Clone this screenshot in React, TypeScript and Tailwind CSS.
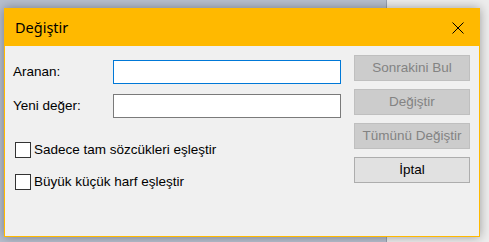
import React from 'react';

const ui = { fontFamily: '"Liberation Sans", Arial, sans-serif' };
const title = { fontFamily: '"Noto Sans", "Open Sans", sans-serif' };

function Field({ label, focused }: { label: string; focused?: boolean }) {
  return (
    <div className="flex items-center h-[24px]">
      <label className="w-[100px] text-[13.5px] text-black">{label}</label>
      <input
        type="text"
        className={`w-[228px] h-[24px] bg-white outline-none border ${focused ? 'border-[#0078d7]' : 'border-[#7a7a7a]'}`}
      />
    </div>
  );
}

function Check({ label }: { label: string }) {
  return (
    <label className="flex items-center h-[16px] gap-[3px] pl-[2px]">
      <span className="w-[16px] h-[16px] bg-white border border-[#333333] shrink-0" />
      <span className="text-[13.5px] text-black whitespace-nowrap">{label}</span>
    </label>
  );
}

function Btn({ label, disabled }: { label: string; disabled?: boolean }) {
  return (
    <button
      className={`w-[116px] h-[26px] border text-[13.5px] leading-none ${
        disabled
          ? 'bg-[#cccccc] border-[#bfbfbf] text-[#838383]'
          : 'bg-[#e1e1e1] border-[#adadad] text-black'
      }`}
    >
      {label}
    </button>
  );
}

export default function App() {
  return (
    <div className="relative w-[489px] h-[242px] overflow-hidden" style={ui}>
      {/* desktop behind the dialog */}
      <div className="absolute inset-0 flex">
        <div className="w-[386px] bg-[#b7bfce]" />
        <div className="w-[1px] bg-[#98a0b0]" />
        <div className="flex-1 bg-[#ededed]" />
      </div>

      <div className="relative ml-[4px] mt-[8px] w-[476px] h-[229px] border border-[#ffb900] bg-[#f0f0f0] flex flex-col shadow-[0_0_10px_rgba(0,0,0,0.35)]">
        <div className="h-[37px] bg-[#ffb900] flex items-center justify-between pl-[10px] pr-[15px]">
          <span className="text-[14.5px] text-black" style={title}>Değiştir</span>
          <svg width="12" height="12" viewBox="0 0 12 12">
            <path d="M0.5 0.5 L11.5 11.5 M11.5 0.5 L0.5 11.5" stroke="#000" strokeWidth="1" />
          </svg>
        </div>

        <div className="flex flex-1 pl-[8px] pr-[9px]">
          <div className="flex flex-col pt-[14px]">
            <div className="flex flex-col gap-[10px]">
              <Field label="Aranan:" focused />
              <Field label="Yeni değer:" />
            </div>
            <div className="flex flex-col gap-[16px] mt-[24px]">
              <Check label="Sadece tam sözcükleri eşleştir" />
              <Check label="Büyük küçük harf eşleştir" />
            </div>
          </div>
          <div className="ml-auto flex flex-col gap-[8px] pt-[9px]">
            <Btn label="Sonrakini Bul" disabled />
            <Btn label="Değiştir" disabled />
            <Btn label="Tümünü Değiştir" disabled />
            <Btn label="İptal" />
          </div>
        </div>
      </div>
    </div>
  );
}
